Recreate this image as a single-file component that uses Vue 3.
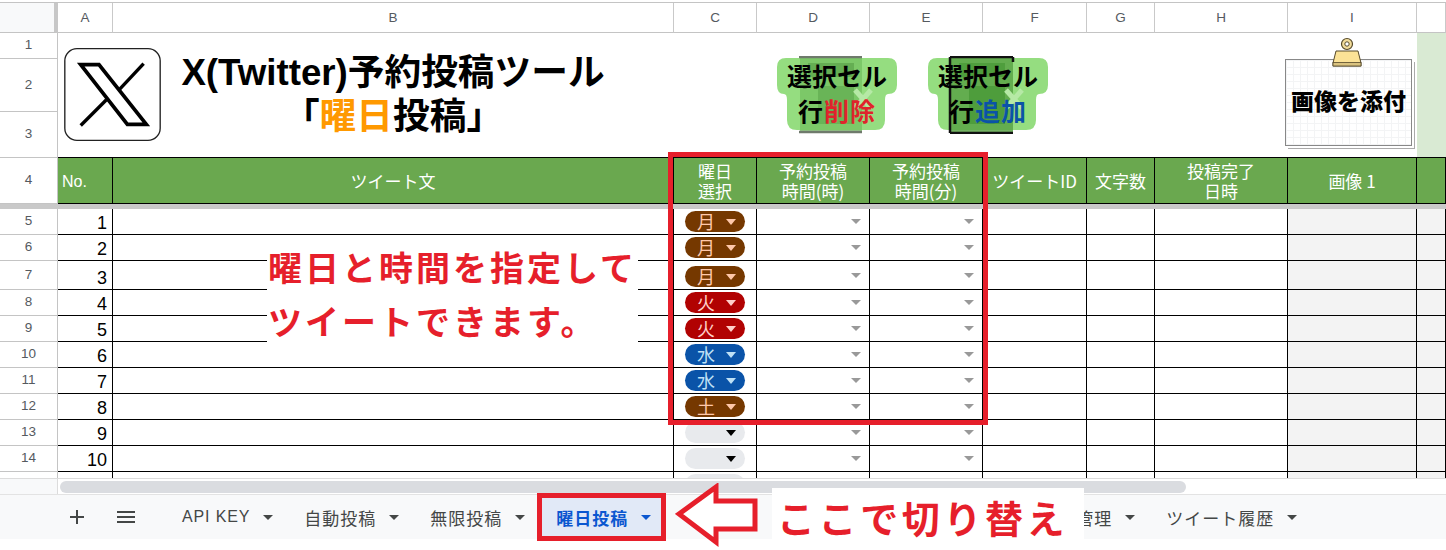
<script setup>
const columns = ['', 'A', 'B', 'C', 'D', 'E', 'F', 'G', 'H', 'I', '']
const headers = ['No.', 'ツイート文', '曜日\n選択', '予約投稿\n時間(時)', '予約投稿\n時間(分)', 'ツイートID', '文字数', '投稿完了\n日時', '画像 1', '']
const days = ['月', '月', '月', '火', '火', '水', '水', '土', '', '', '']
const dayClass = { 月: 'brown', 土: 'brown', 火: 'red', 水: 'blue', '': 'empty' }
const rows = days.map((day, i) => ({
  key: i,
  label: i < 10 ? i + 5 : '',
  no: i < 10 ? i + 1 : '',
  day,
  tone: dayClass[day],
  tall: i === 2,
}))
const topRows = [
  { label: 1, cls: 'r1' },
  { label: 2, cls: 'r2' },
  { label: 3, cls: 'r3' },
]
</script>

<template>
  <div class="page">
    <div class="sheet">
      <div class="row colhead">
        <div v-for="(c, i) in columns" :key="i" class="colcell" :class="{ corner: i === 0 }">{{ c }}</div>
      </div>

      <div class="top">
        <div class="toplabels">
          <div v-for="r in topRows" :key="r.label" class="rowlabel" :class="r.cls">{{ r.label }}</div>
        </div>
        <div class="banner">
          <svg class="logo" viewBox="27 25 286 275">
            <rect x="29" y="27" width="282" height="271" rx="36" fill="#fff" stroke="#222" stroke-width="4" />
            <polygon points="76,74 130,74 270,251 214,251" fill="#fff" stroke="#000" stroke-width="11" />
            <line x1="262" y1="71" x2="190" y2="148" stroke="#000" stroke-width="10" />
            <line x1="152" y1="178" x2="76" y2="254" stroke="#000" stroke-width="10" />
          </svg>
          <div class="title">
            <div>X(Twitter)予約投稿ツール</div>
            <div>「<span class="orange">曜日</span>投稿」</div>
          </div>
          <div class="btn first">
            <svg class="btnbg" viewBox="0 0 120 78">
              <path d="M9 2H111Q120 2 120 11V29Q120 38 111 38Q108 38 108 44V64Q108 74 98 74H20Q10 74 10 64V44Q10 38 7 38Q0 38 0 29V11Q0 2 9 2Z" fill="#95dd80" />
              <rect x="23" y="1" width="62" height="75" fill="#74c060" fill-opacity=".75" />
              <path d="M22 1H85M22 76H85" stroke="#6f7a6c" stroke-width="2.5" />
              <rect x="31" y="7" width="46" height="14" fill="#5ea64c" fill-opacity=".75" />
              <rect x="41" y="30" width="36" height="38" fill="#5ea64c" fill-opacity=".6" />
              <path d="M78 34L94 52M94 34L78 52" stroke="#b6e9a6" stroke-width="5" />
            </svg>
            <div class="btntext">選択セル<br /><span class="second-line">行<span class="del">削除</span></span></div>
          </div>
          <div class="btn second">
            <svg class="btnbg" viewBox="0 0 120 78">
              <path d="M9 2H111Q120 2 120 11V29Q120 38 111 38Q108 38 108 44V64Q108 74 98 74H20Q10 74 10 64V44Q10 38 7 38Q0 38 0 29V11Q0 2 9 2Z" fill="#95dd80" />
              <rect x="23" y="1" width="62" height="76" fill="#5aa547" fill-opacity=".85" />
              <path d="M22 1H85M22 77H85M22 1V77M85 1V6" fill="none" stroke="#111" stroke-width="2.5" />
              <rect x="31" y="7" width="46" height="14" fill="#4a9a38" fill-opacity=".8" />
              <rect x="41" y="30" width="36" height="38" fill="#4a9a38" fill-opacity=".85" />
              <path d="M78 34L94 52M94 34L78 52" stroke="#b6e9a6" stroke-width="5" />
            </svg>
            <div class="btntext">選択セル<br /><span class="second-line">行<span class="add">追加</span></span></div>
          </div>
          <div class="note">
            <div class="paper">画像を添付</div>
            <svg class="clip" viewBox="0 0 32 32">
              <circle cx="16" cy="7" r="5.5" fill="#f2dc9a" stroke="#55492a" stroke-width="1.2" />
              <circle cx="16" cy="7" r="2.2" fill="#fff" stroke="#55492a" stroke-width="1" />
              <path d="M5 14H27L30 26V29H2V26Z" fill="#fbe296" stroke="#55492a" stroke-width="1" />
              <rect x="2" y="25.5" width="28" height="3.5" fill="#d9c27f" stroke="#55492a" stroke-width=".8" />
            </svg>
          </div>
        </div>
        <div class="jcell"></div>
      </div>

      <div class="row head">
        <div class="rowlabel">4</div>
        <div v-for="(h, i) in headers" :key="i" class="hcell" :class="{ left: i === 0 }">{{ h }}</div>
      </div>
      <div class="freeze"></div>

      <div v-for="r in rows" :key="r.key" class="row data" :class="{ tall: r.tall }">
        <div class="rowlabel">{{ r.label }}</div>
        <div class="cell num">{{ r.no }}</div>
        <div class="cell"></div>
        <div class="cell pillcell">
          <div class="pill" :class="r.tone">
            <span>{{ r.day }}</span><i class="tri"></i>
          </div>
        </div>
        <div class="cell drop"><i class="gtri"></i></div>
        <div class="cell drop"><i class="gtri"></i></div>
        <div class="cell"></div>
        <div class="cell"></div>
        <div class="cell"></div>
        <div class="cell grey"></div>
        <div class="cell grey"></div>
      </div>
    </div>

    <div class="hscroll">
      <div class="hcorner"></div>
      <div class="thumb"></div>
    </div>

    <div class="tabs">
      <svg class="plus" viewBox="0 0 14 14"><path d="M7 0V14M0 7H14" stroke="#444746" stroke-width="2" /></svg>
      <svg class="menu" viewBox="0 0 18 14"><path d="M0 2H18M0 7H18M0 12H18" stroke="#444746" stroke-width="2" /></svg>
      <div class="tab latin">API KEY<i class="ttri"></i></div>
      <div class="tab">自動投稿<i class="ttri"></i></div>
      <div class="tab">無限投稿<i class="ttri"></i></div>
      <div class="tab active">曜日投稿<i class="ttri"></i></div>
      <div class="tab pushed">ツイート管理<i class="ttri"></i></div>
      <div class="tab">ツイート履歴<i class="ttri"></i></div>
    </div>

    <div class="redbox"></div>
    <div class="callout main">
      <div>曜日と時間を指定して</div>
      <div>ツイートできます。</div>
    </div>
    <div class="tabframe"></div>
    <svg class="arrow" viewBox="0 0 84 64">
      <polygon points="4,31 41,4 41,18 80,18 80,46 41,46 41,59" fill="#fff" stroke="#e61f2b" stroke-width="5" />
    </svg>
    <div class="callout switch">ここで切り替え</div>
  </div>
</template>

<style scoped>
.page {
  --cols: 58px 55px 561px 83px 113px 113px 104px 68px 133px 129px 29px;
  --red: #e61f2b;
  position: relative;
  width: 1446px;
  height: 550px;
  overflow: hidden;
  background: #fff;
  display: flex;
  flex-direction: column;
  padding-top: 2px;
  box-sizing: border-box;
  font-family: "Liberation Sans", "Noto Sans CJK JP", sans-serif;
  color: #000;
}
.sheet {
  height: 476px;
  overflow: hidden;
  flex: none;
  border-top: 1px solid #c4c4c4;
  box-sizing: border-box;
}
.row {
  display: grid;
  grid-template-columns: var(--cols);
}
.colhead {
  height: 30px;
}
.colcell {
  border-right: 1px solid #c9c9c9;
  border-bottom: 1px solid #c4c4c4;
  display: flex;
  align-items: center;
  justify-content: center;
  font-size: 13.5px;
  color: #555a5f;
}
.corner {
  background: #f8f9fa;
  border-right: 4px solid #c7c7c7;
}
.top {
  display: flex;
  height: 125px;
}
.toplabels {
  width: 58px;
  flex: none;
}
.rowlabel {
  display: flex;
  align-items: center;
  justify-content: center;
  box-sizing: border-box;
  padding-bottom: 2px;
  font-size: 13.5px;
  color: #555a5f;
  border-right: 1px solid #c4c4c4;
  border-bottom: 1px solid #c4c4c4;
  background: #fff;
}
.r1 { height: 26px; }
.r2 { height: 53px; }
.r3 { height: 46px; }
.banner {
  width: 1359px;
  flex: none;
  display: flex;
  align-items: center;
  padding-left: 6px;
  box-sizing: border-box;
  border-bottom: 1px solid #000;
}
.logo {
  width: 97px;
  height: 93px;
  margin-top: -2px;
  flex: none;
}
.title {
  width: 464px;
  flex: none;
  text-align: center;
  font-weight: 700;
  font-size: 36.7px;
  line-height: 44px;
  font-family: "Liberation Sans", "Noto Sans CJK JP", sans-serif;
}
.orange { color: #ff9900; }
.btn {
  position: relative;
  width: 120px;
  height: 78px;
  flex: none;
}
.first { margin-left: 152px; }
.second { margin-left: 31px; }
.btnbg {
  position: absolute;
  inset: 0;
  width: 120px;
  height: 78px;
}
.btntext {
  position: relative;
  text-align: center;
  padding-top: 2px;
  font-family: "Noto Sans CJK JP", sans-serif;
  font-weight: 700;
  font-size: 25px;
  line-height: 35px;
}
.second-line {
  letter-spacing: 1px;
}
.del { color: #e0242c; }
.add { color: #0a53a8; }
.note {
  position: relative;
  width: 129px;
  height: 111px;
  margin-left: 237px;
  margin-top: -5px;
  flex: none;
}
.paper {
  position: absolute;
  left: 0;
  top: 22px;
  width: 127px;
  height: 87px;
  box-sizing: border-box;
  border: 1px solid #888;
  padding-bottom: 5px;
  background-color: #fff;
  background-image:
    repeating-linear-gradient(0deg, #f3f4f5 0 1px, transparent 1px 7px),
    repeating-linear-gradient(90deg, #f3f4f5 0 1px, transparent 1px 7px);
  box-shadow: 2px 2px 0 #fff, 3px 3px 0 #aaa;
  display: flex;
  align-items: center;
  justify-content: center;
  font-family: "Noto Sans CJK JP", sans-serif;
  font-weight: 900;
  font-size: 23px;
  white-space: nowrap;
}
.clip {
  position: absolute;
  left: 46px;
  top: 0;
  width: 32px;
  height: 32px;
}
.jcell {
  width: 29px;
  flex: none;
  background: #d9ead3;
  border-bottom: 1px solid #000;
}
.head {
  height: 46px;
}
.hcell {
  background: #6aa84f;
  color: #fff;
  border-right: 1px solid #000;
  border-bottom: 1px solid #000;
  display: flex;
  align-items: center;
  justify-content: center;
  text-align: center;
  white-space: pre-line;
  font-family: "Noto Sans CJK JP", sans-serif;
  font-size: 17px;
  line-height: 20px;
  box-sizing: border-box;
}
.hcell.left {
  justify-content: flex-start;
  padding: 2px 0 0 4px;
  font-size: 16px;
  font-family: "Liberation Sans", sans-serif;
}
.freeze {
  height: 5px;
  background: #c9c9c9;
}
.data {
  height: 26px;
}
.data.tall {
  height: 29px;
}
.cell {
  border-right: 1px solid #000;
  border-bottom: 1px solid #000;
  box-sizing: border-box;
  background: #fff;
}
.grey {
  background: #f3f3f3;
}
.num {
  display: flex;
  align-items: flex-end;
  justify-content: flex-end;
  padding-right: 5px;
  font-size: 18px;
  line-height: 22px;
}
.pillcell {
  display: flex;
  align-items: flex-end;
  padding: 0 0 2px 11px;
}
.pill {
  width: 60px;
  height: 21px;
  border-radius: 11px;
  display: flex;
  align-items: center;
  padding: 0 9px 0 12px;
  box-sizing: border-box;
  font-family: "Noto Sans CJK JP", sans-serif;
  font-size: 18px;
  line-height: 21px;
}
.tri {
  margin-left: auto;
  width: 0;
  height: 0;
  border-left: 5px solid transparent;
  border-right: 5px solid transparent;
  border-top: 6px solid currentColor;
}
.brown { background: #753800; color: #ffc8aa; }
.red { background: #b10202; color: #ffcfc9; }
.blue { background: #0a53a8; color: #bfe1f6; }
.empty { background: #e8eaed; color: #000; }
.drop {
  display: flex;
  align-items: center;
  justify-content: flex-end;
  padding-right: 8px;
}
.gtri {
  width: 0;
  height: 0;
  border-left: 5px solid transparent;
  border-right: 5px solid transparent;
  border-top: 5px solid #999;
}
.hscroll {
  height: 16px;
  flex: none;
  position: relative;
  border-top: 1px solid #dcdcdc;
  box-sizing: border-box;
  display: flex;
  align-items: center;
}
.hcorner {
  width: 58px;
  align-self: stretch;
  background: #f8f9fa;
  border-right: 1px solid #dcdcdc;
  box-sizing: border-box;
  flex: none;
}
.thumb {
  width: 1126px;
  height: 12px;
  margin-left: 2px;
  border-radius: 6px;
  background: #dadce0;
}
.tabs {
  height: 45px;
  flex: none;
  background: #f8f9fa;
  border-top: 1px solid #e3e3e3;
  box-sizing: border-box;
  display: flex;
  align-items: center;
  gap: 4px;
  padding-left: 70px;
}
.plus {
  width: 14px;
  height: 14px;
  flex: none;
}
.menu {
  width: 18px;
  height: 14px;
  margin-left: 29px;
  margin-right: 28px;
  flex: none;
}
.tab {
  height: 100%;
  display: flex;
  align-items: center;
  gap: 13px;
  padding: 0 12px 0 15px;
  font-family: "Noto Sans CJK JP", sans-serif;
  font-size: 17px;
  letter-spacing: 1px;
  color: #444746;
  white-space: nowrap;
  flex: none;
}
.latin {
  font-family: "Liberation Sans", sans-serif;
  font-size: 16px;
  letter-spacing: .85px;
}
.ttri {
  width: 0;
  height: 0;
  border-left: 5px solid transparent;
  border-right: 5px solid transparent;
  border-top: 5px solid #444746;
}
.active {
  background: #e1e9f7;
  color: #0b57d0;
  font-weight: 700;
}
.active .ttri {
  border-top-color: #0b57d0;
}
.pushed {
  margin-left: 322px;
}
.redbox {
  position: absolute;
  left: 668px;
  top: 152px;
  width: 320px;
  height: 273px;
  border: 5px solid var(--red);
  box-sizing: border-box;
}
.callout {
  position: absolute;
  background: #fff;
  color: var(--red);
  font-family: "Noto Sans CJK JP", sans-serif;
  font-weight: 700;
  white-space: nowrap;
}
.main {
  left: 267px;
  top: 240px;
  width: 371px;
  height: 111px;
  box-sizing: border-box;
  padding-left: 1px;
  font-size: 34px;
  letter-spacing: 3px;
  line-height: 54px;
}
.switch {
  left: 772px;
  top: 488px;
  width: 312px;
  height: 58px;
  box-sizing: border-box;
  padding-left: 5px;
  font-size: 38px;
  letter-spacing: 3.6px;
  line-height: 58px;
}
.tabframe {
  position: absolute;
  left: 537px;
  top: 493px;
  width: 129px;
  height: 48px;
  border: 5px solid var(--red);
  box-sizing: border-box;
}
.arrow {
  position: absolute;
  left: 675px;
  top: 483px;
  width: 84px;
  height: 64px;
}
</style>

<style>
html, body {
  margin: 0;
  background: #fff;
}
</style>
